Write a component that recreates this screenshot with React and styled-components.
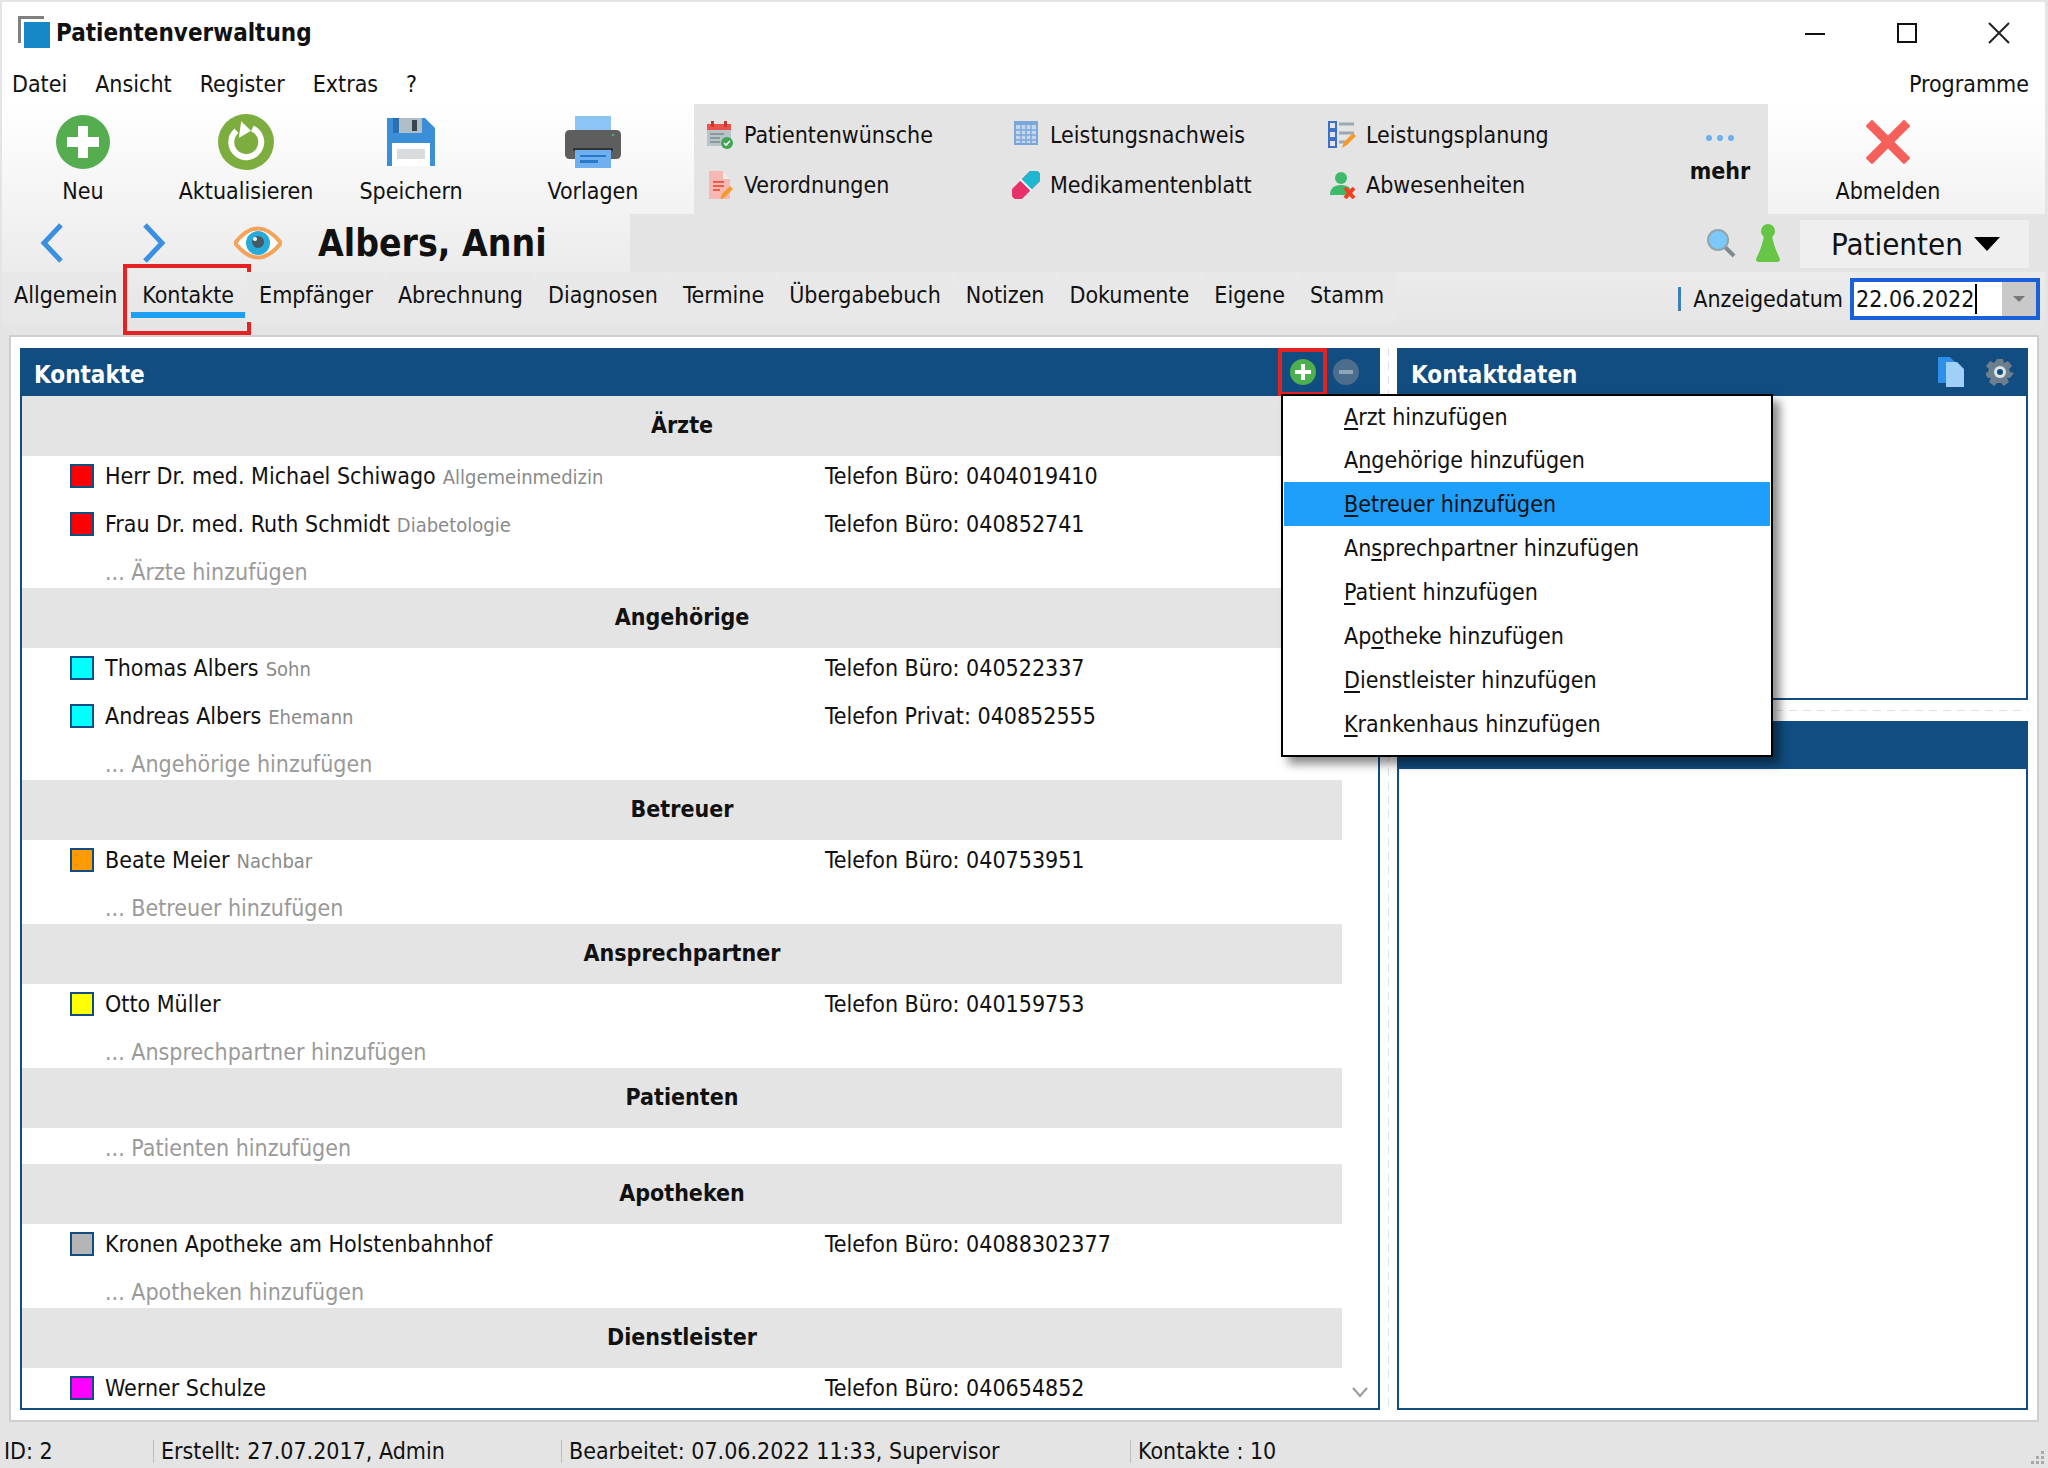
import React from "react";
import styled, { createGlobalStyle } from "styled-components";

const NAVY = "#114d80";

const Global = createGlobalStyle`
  html, body { margin: 0; padding: 0; background: #e4e4e4; }
  body {
    font-family: "DejaVu Sans", "Noto Sans", sans-serif;
    font-stretch: condensed;
    font-size: 23px;
    color: #111;
  }
  * { box-sizing: border-box; }
`;

const Window = styled.div`
  width: 2048px;
  height: 1468px;
  display: flex;
  flex-direction: column;
  overflow: hidden;
  background: #e4e4e4;
  border-top: 2px solid #e4e4e4;
  border-left: 2px solid #e4e4e4;
  border-right: 3px solid #e4e4e4;
`;

const TitleBar = styled.div`
  height: 62px;
  flex: none;
  display: flex;
  align-items: center;
  background: #fff;
  padding-left: 16px;
`;
const AppLogo = styled.svg`
  width: 34px;
  height: 34px;
  margin-right: 4px;
`;
const Title = styled.div`
  font-weight: 700;
  font-size: 24px;
`;
const WinButtons = styled.div`
  margin-left: auto;
  display: flex;
`;
const WinButton = styled.div`
  width: 92px;
  height: 62px;
  display: flex;
  align-items: center;
  justify-content: center;
`;

const MenuBar = styled.div`
  height: 40px;
  flex: none;
  display: flex;
  align-items: center;
  gap: 28px;
  padding: 0 16px 0 10px;
  background: #fff;
`;
const MenuEnd = styled.div`
  margin-left: auto;
`;

const TopZone = styled.div`
  height: 231px;
  flex: none;
  display: flex;
  flex-direction: column;
  background: linear-gradient(#fff, #e4e4e4);
`;

const Toolbar = styled.div`
  height: 110px;
  flex: none;
  display: flex;
`;
const ToolGroup = styled.div`
  width: 692px;
  display: flex;
`;
const Tool = styled.div`
  width: ${(p) => p.$w}px;
  display: flex;
  flex-direction: column;
  align-items: center;
  padding-top: 9px;
`;
const ToolIcon = styled.div`
  height: 57px;
  display: flex;
  align-items: center;
  justify-content: center;
`;
const ToolLabel = styled.div`
  line-height: 30px;
  margin-top: 6px;
`;

const QuickPanel = styled.div`
  width: 1074px;
  display: grid;
  grid-template-columns: 306px 316px 344px 96px;
  grid-template-rows: 50px 50px;
  padding: 6px 0 0 12px;
  background: #e4e4e4;
`;
const QuickItem = styled.div`
  display: flex;
  align-items: center;
  gap: 10px;
`;
const More = styled.div`
  grid-column: 4;
  grid-row: 1 / 3;
  display: flex;
  flex-direction: column;
  align-items: center;
  font-weight: 700;
`;
const MoreDots = styled.svg`
  margin-top: 24px;
  margin-bottom: 16px;
`;

const NavRow = styled.div`
  height: 58px;
  flex: none;
  display: flex;
`;
const NavLeft = styled.div`
  width: 628px;
  display: flex;
  align-items: center;
  padding-left: 38px;
`;
const PatientName = styled.div`
  font-weight: 700;
  font-size: 37px;
  margin-left: 36px;
`;
const NavFill = styled.div`
  flex: 1;
  display: flex;
  align-items: center;
  justify-content: flex-end;
  gap: 19px;
  padding-right: 16px;
  background: #e4e4e4;
`;
const ModeButton = styled.div`
  width: 229px;
  height: 48px;
  margin-top: 2px;
  display: flex;
  align-items: center;
  gap: 11px;
  padding-left: 31px;
  background: #efefef;
  font-size: 31px;
`;
const Triangle = styled.div`
  width: 0;
  height: 0;
  border-left: 13px solid transparent;
  border-right: 13px solid transparent;
  border-top: 14px solid #000;
`;

const TabRow = styled.div`
  height: 63px;
  flex: none;
  display: flex;
  align-items: flex-start;
`;
const Tab = styled.div`
  position: relative;
  height: 50px;
  display: flex;
  align-items: center;
  padding: 0 12px 4px;
  margin-right: 1px;
  background: ${(p) => (p.$active ? "transparent" : "#e8e8e8")};
  ${(p) =>
    p.$active &&
    `
    &::before {
      content: "";
      position: absolute;
      left: -7px;
      right: -5px;
      top: -8px;
      bottom: -13px;
      border: 4px solid #e52222;
    }
    &::after {
      content: "";
      position: absolute;
      left: 1px;
      right: 1px;
      bottom: 4px;
      height: 6px;
      background: #1e9ff2;
    }
  `}
`;
const DatePart = styled.div`
  margin-left: auto;
  display: flex;
  align-items: center;
  height: 54px;
  padding-right: 5px;
`;
const DateSep = styled.div`
  width: 3px;
  height: 24px;
  margin-right: 12px;
  background: #3f7fb8;
`;
const DateBox = styled.div`
  width: 190px;
  height: 42px;
  margin-left: 7px;
  display: flex;
  align-items: stretch;
  border: 4px solid #1a60d8;
  background: #fff;
`;
const DateText = styled.div`
  flex: 1;
  display: flex;
  align-items: center;
  padding-left: 2px;
  line-height: 1;
`;
const Caret = styled.div`
  width: 2px;
  height: 30px;
  margin-left: 1px;
  background: #000;
`;
const DateDrop = styled.div`
  width: 34px;
  display: flex;
  align-items: center;
  justify-content: center;
  background: #c9c9c9;
`;
const DateArrow = styled.div`
  width: 0;
  height: 0;
  border-left: 6px solid transparent;
  border-right: 6px solid transparent;
  border-top: 6px solid #777;
`;

const Workspace = styled.div`
  height: 1087px;
  flex: none;
  margin: 0 6px 0 7px;
  padding: 11px 9px 10px;
  background: #fff;
  border: 2px solid #cfcfcf;
`;
const Panes = styled.div`
  position: relative;
  height: 100%;
  display: flex;
`;
const LeftPane = styled.div`
  position: relative;
  width: 1360px;
  display: flex;
  flex-direction: column;
`;
const VSplit = styled.div`
  width: 17px;
  margin: 0 8px 0 8px;
  flex: none;
  width: 1px;
  background: repeating-linear-gradient(#e0e0e0 0 8px, #fff 8px 14px);
`;
const RightPane = styled.div`
  flex: 1;
  display: flex;
  flex-direction: column;
`;
const Panel = styled.div`
  display: flex;
  flex-direction: column;
  height: ${(p) => (p.$h ? `${p.$h}px` : "auto")};
  flex: ${(p) => (p.$h ? "none" : "1")};
  min-height: 0;
`;
const PanelHead = styled.div`
  height: 48px;
  flex: none;
  display: flex;
  align-items: center;
  padding: 5px 0 0 14px;
  background: ${NAVY};
  color: #fff;
  font-weight: 700;
  font-size: 24px;
`;
const HeadTools = styled.div`
  margin-left: auto;
  margin-top: -5px;
  height: 48px;
  display: flex;
  align-items: center;
  font-weight: 400;
  padding-right: ${(p) => p.$pad}px;
  gap: ${(p) => p.$gap}px;
`;
const HeadButton = styled.div`
  width: ${(p) => p.$w}px;
  height: 48px;
  display: flex;
  align-items: center;
  justify-content: center;
  border: ${(p) => (p.$marked ? "4px solid #e52222" : "none")};
`;
const PanelBody = styled.div`
  flex: 1;
  min-height: 0;
  overflow: hidden;
  background: #fff;
  border: 2px solid ${NAVY};
  border-top: none;
`;
const ContactList = styled.div`
  width: 1320px;
`;
const GroupHead = styled.div`
  height: 60px;
  display: flex;
  align-items: center;
  justify-content: center;
  padding-bottom: 2px;
  background: #e4e4e4;
  font-weight: 700;
`;
const Row = styled.div`
  height: 48px;
  display: grid;
  grid-template-columns: 24px 709px 1fr;
  column-gap: 11px;
  padding: 8px 0 0 48px;
  align-items: center;
  grid-template-rows: 24px;
`;
const Swatch = styled.div`
  width: 24px;
  height: 24px;
  background: ${(p) => p.$color};
  border: 2px solid ${NAVY};
`;
const Name = styled.div`
  white-space: nowrap;
`;
const Role = styled.span`
  margin-left: 7px;
  font-size: 20px;
  color: #8a8a8a;
`;
const AddRow = styled.div`
  height: 36px;
  padding: 6px 0 0 83px;
  line-height: 28px;
  color: #9a9a9a;
`;
const ScrollMark = styled.svg`
  position: absolute;
  right: 11px;
  bottom: 12px;
`;
const HSplit = styled.div`
  height: 1px;
  margin: 10px 0 10px;
  flex: none;
  background: repeating-linear-gradient(90deg, #e0e0e0 0 8px, #fff 8px 14px);
`;

const PopMenu = styled.div`
  position: absolute;
  left: 1261px;
  top: 46px;
  width: 492px;
  height: 363px;
  z-index: 5;
  padding: 0 1px;
  background: #fff;
  border: 2px solid #000;
  box-shadow: 7px 7px 9px rgba(0, 0, 0, 0.45);
`;
const PopItem = styled.div`
  height: ${(p) => (p.$first ? 42 : 44)}px;
  display: flex;
  align-items: center;
  padding-left: 60px;
  background: ${(p) => (p.$active ? "#1e9ffb" : "transparent")};
  u {
    text-decoration-thickness: 2px;
    text-underline-offset: 3px;
  }
`;

const StatusBar = styled.div`
  flex: 1;
  display: flex;
  align-items: flex-start;
  padding-top: 18px;
  position: relative;
`;
const StatusCell = styled.div`
  width: ${(p) => p.$w}px;
  height: 23px;
  line-height: 23px;
  padding-left: ${(p) => (p.$first ? 2 : 7)}px;
  border-left: ${(p) => (p.$first ? "none" : "1px solid #bdbdbd")};
  white-space: nowrap;
`;
const Grip = styled.svg`
  position: absolute;
  right: 0;
  bottom: 2px;
`;

const Ico = ({ w = 28, h = 28, vb, children }) => (
  <svg width={w} height={h} viewBox={vb || `0 0 ${w} ${h}`}>
    {children}
  </svg>
);

const menus = ["Datei", "Ansicht", "Register", "Extras", "?"];
const tabs = ["Allgemein", "Kontakte", "Empfänger", "Abrechnung", "Diagnosen", "Termine", "Übergabebuch", "Notizen", "Dokumente", "Eigene", "Stamm"];

const groups = [
  {
    title: "Ärzte",
    add: "Ärzte",
    rows: [
      { c: "#ff0000", n: "Herr Dr. med. Michael Schiwago", r: "Allgemeinmedizin", t: "Telefon Büro: 0404019410" },
      { c: "#ff0000", n: "Frau Dr. med. Ruth Schmidt", r: "Diabetologie", t: "Telefon Büro: 040852741" },
    ],
  },
  {
    title: "Angehörige",
    add: "Angehörige",
    rows: [
      { c: "#00ffff", n: "Thomas Albers", r: "Sohn", t: "Telefon Büro: 040522337" },
      { c: "#00ffff", n: "Andreas Albers", r: "Ehemann", t: "Telefon Privat: 040852555" },
    ],
  },
  { title: "Betreuer", add: "Betreuer", rows: [{ c: "#ff9a00", n: "Beate Meier", r: "Nachbar", t: "Telefon Büro: 040753951" }] },
  { title: "Ansprechpartner", add: "Ansprechpartner", rows: [{ c: "#ffff00", n: "Otto Müller", t: "Telefon Büro: 040159753" }] },
  { title: "Patienten", add: "Patienten", rows: [] },
  { title: "Apotheken", add: "Apotheken", rows: [{ c: "#b4b4b4", n: "Kronen Apotheke am Holstenbahnhof", t: "Telefon Büro: 04088302377" }] },
  { title: "Dienstleister", rows: [{ c: "#ff00ff", n: "Werner Schulze", t: "Telefon Büro: 040654852" }] },
];

const popItems = [
  ["", "A", "rzt hinzufügen"],
  ["A", "n", "gehörige hinzufügen"],
  ["", "B", "etreuer hinzufügen"],
  ["An", "s", "prechpartner hinzufügen"],
  ["", "P", "atient hinzufügen"],
  ["Ap", "o", "theke hinzufügen"],
  ["", "D", "ienstleister hinzufügen"],
  ["", "K", "rankenhaus hinzufügen"],
];

const Chevron = ({ dir }) => (
  <svg width="24" height="40" viewBox="0 0 24 40">
    <polyline
      points={dir === "l" ? "21,2 4,20 21,38" : "3,2 20,20 3,38"}
      fill="none"
      stroke="#3a8fe0"
      strokeWidth="5"
    />
  </svg>
);

export default function App() {
  return (
    <>
      <Global />
      <Window>
        <TitleBar>
          <AppLogo viewBox="0 0 34 34">
            <path d="M0 0h26v3H3v24H0z" fill="#808080" />
            <rect x="6" y="6" width="26" height="26" fill="#1688c8" />
          </AppLogo>
          <Title>Patientenverwaltung</Title>
          <WinButtons>
            <WinButton>
              <svg width="20" height="20"><path d="M0 11h20" stroke="#111" strokeWidth="2" /></svg>
            </WinButton>
            <WinButton>
              <svg width="20" height="20"><rect x="1" y="1" width="18" height="18" fill="none" stroke="#111" strokeWidth="2" /></svg>
            </WinButton>
            <WinButton>
              <svg width="22" height="22"><path d="M1 1l20 20M21 1L1 21" stroke="#222" strokeWidth="2" /></svg>
            </WinButton>
          </WinButtons>
        </TitleBar>

        <MenuBar>
          {menus.map((m) => (
            <div key={m}>{m}</div>
          ))}
          <MenuEnd>Programme</MenuEnd>
        </MenuBar>

        <TopZone>
          <Toolbar>
            <ToolGroup>
              <Tool $w={162}>
                <ToolIcon>
                  <Ico w={56} h={56}>
                    <circle cx="28" cy="28" r="27" fill="#55ad50" />
                    <path d="M23 12h10v11h11v10H33v11H23V33H12V23h11z" fill="#fff" />
                  </Ico>
                </ToolIcon>
                <ToolLabel>Neu</ToolLabel>
              </Tool>
              <Tool $w={164}>
                <ToolIcon>
                  <Ico w={56} h={56}>
                    <circle cx="28" cy="28" r="28" fill="#7dad3e" />
                    <path d="M21 15a15 15 0 1 0 16 1" fill="none" stroke="#fff" strokeWidth="6" transform="rotate(-12 28 28)" />
                    <path d="M22 8l11 8-11 9z" fill="#fff" transform="rotate(8 28 16)" />
                  </Ico>
                </ToolIcon>
                <ToolLabel>Aktualisieren</ToolLabel>
              </Tool>
              <Tool $w={166}>
                <ToolIcon>
                  <Ico w={48} h={48}>
                    <path d="M0 0h38l10 10v38H0z" fill="#3b8fd8" />
                    <path d="M6 0h29v15H6z" fill="#2a6fb4" />
                    <path d="M12 0h23v15H12z" fill="#b0bec8" />
                    <rect x="25" y="2" width="5" height="11" fill="#37474f" />
                    <rect x="5" y="25" width="38" height="23" fill="#fff" />
                    <rect x="10" y="31" width="28" height="10" fill="#d8dcde" />
                  </Ico>
                </ToolIcon>
                <ToolLabel>Speichern</ToolLabel>
              </Tool>
              <Tool $w={198}>
                <ToolIcon>
                  <Ico w={56} h={52}>
                    <rect x="10" y="0" width="36" height="18" fill="#8cc4f5" />
                    <path d="M5 14h46q5 0 5 5v19q0 5-5 5H5q-5 0-5-5V19q0-5 5-5z" fill="#5e5e5e" />
                    <rect x="8" y="32" width="40" height="3" fill="#333" />
                    <rect x="10" y="34" width="36" height="18" fill="#6eb0f0" />
                    <rect x="15" y="39" width="26" height="2" fill="#2a78c8" />
                    <rect x="15" y="44" width="18" height="3" fill="#2a78c8" />
                    <circle cx="48" cy="19" r="1" fill="#3fd08a" />
                  </Ico>
                </ToolIcon>
                <ToolLabel>Vorlagen</ToolLabel>
              </Tool>
            </ToolGroup>

            <QuickPanel>
              <QuickItem>
                <Ico>
                  <rect x="1" y="4" width="24" height="21" fill="#b9c4c9" />
                  <rect x="1" y="3" width="24" height="6" fill="#e8534a" />
                  <rect x="5" y="0" width="3" height="6" fill="#c23a32" />
                  <rect x="18" y="0" width="3" height="6" fill="#c23a32" />
                  <path d="M4 13h14M4 17h10M4 21h10" stroke="#8b989e" strokeWidth="2" />
                  <circle cx="21" cy="22" r="6" fill="#3fa652" />
                  <path d="M18 22l2 2 4-4" stroke="#fff" strokeWidth="1.6" fill="none" />
                </Ico>
                <span>Patientenwünsche</span>
              </QuickItem>
              <QuickItem>
                <Ico>
                  <rect x="2" y="0" width="24" height="24" fill="#7aa7d8" />
                  <path d="M4 4h20v18H4z" fill="#c4d6ec" />
                  <path d="M4 9h20M4 14h20M4 19h20M9 4v18M14 4v18M19 4v18" stroke="#7aa7d8" strokeWidth="1.4" />
                </Ico>
                <span>Leistungsnachweis</span>
              </QuickItem>
              <QuickItem>
                <Ico>
                  <rect x="1" y="1" width="7" height="7" fill="none" stroke="#3d6fc4" strokeWidth="2" />
                  <rect x="1" y="10" width="7" height="7" fill="none" stroke="#3d6fc4" strokeWidth="2" />
                  <rect x="1" y="19" width="7" height="7" fill="none" stroke="#3d6fc4" strokeWidth="2" />
                  <path d="M11 3h15M11 12h15M11 21h7" stroke="#9fa8b0" strokeWidth="3" />
                  <path d="M14 27l2-6 9-9 3 3-9 9z" fill="#f39a2b" />
                </Ico>
                <span>Leistungsplanung</span>
              </QuickItem>
              <More>
                <MoreDots width="30" height="8">
                  <circle cx="4" cy="4" r="3" fill="#6cb0ec" />
                  <circle cx="15" cy="4" r="3" fill="#6cb0ec" />
                  <circle cx="26" cy="4" r="3" fill="#6cb0ec" />
                </MoreDots>
                mehr
              </More>
              <QuickItem>
                <Ico>
                  <path d="M3 0h14l7 8v22H3z" fill="#f7b8b4" />
                  <path d="M17 0l7 8h-7z" fill="#eee" />
                  <path d="M7 11h11M7 15h11M7 19h7" stroke="#e8604c" strokeWidth="2" />
                  <path d="M14 29l2-6 8-8 3 3-8 8z" fill="#f39a2b" />
                </Ico>
                <span>Verordnungen</span>
              </QuickItem>
              <QuickItem>
                <Ico>
                  <g transform="rotate(45 14 14)">
                    <rect x="7" y="-4" width="14" height="36" rx="7" fill="#e8306a" />
                    <path d="M7 14V3a7 7 0 0 1 14 0v11z" fill="#1fb6d0" />
                    <rect x="6" y="13" width="16" height="2" fill="#fff" />
                  </g>
                </Ico>
                <span>Medikamentenblatt</span>
              </QuickItem>
              <QuickItem>
                <Ico>
                  <circle cx="13" cy="7" r="6" fill="#3dbb6a" />
                  <path d="M2 24q0-10 11-10t11 10z" fill="#3dbb6a" />
                  <path d="M17 17l9 10M26 17l-9 10" stroke="#f0401e" strokeWidth="4" />
                </Ico>
                <span>Abwesenheiten</span>
              </QuickItem>
            </QuickPanel>

            <Tool $w={240}>
              <ToolIcon>
                <Ico w={48} h={48}>
                  <path d="M8 3l16 16L40 3l5 5-16 16 16 16-5 5-16-16L8 45l-5-5 16-16L3 8z" fill="#f5605a" stroke="#f5605a" strokeWidth="2" strokeLinejoin="round" />
                </Ico>
              </ToolIcon>
              <ToolLabel>Abmelden</ToolLabel>
            </Tool>
          </Toolbar>

          <NavRow>
            <NavLeft>
              <Chevron dir="l" />
              <svg width="78" height="10" />
              <Chevron dir="r" />
              <svg width="68" height="10" />
              <Ico w={48} h={34}>
                <path d="M1 17Q24-12 47 17 24 46 1 17z" fill="#fff" stroke="#f5a35a" strokeWidth="4" />
                <circle cx="24" cy="17" r="12" fill="#29abd9" />
                <circle cx="24" cy="16" r="6" fill="#455a64" />
                <circle cx="21" cy="13" r="2" fill="#fff" />
              </Ico>
              <PatientName>Albers, Anni</PatientName>
            </NavLeft>
            <NavFill>
              <Ico w={30} h={30}>
                <path d="M19 19l9 9" stroke="#7d8b91" strokeWidth="4" />
                <circle cx="12" cy="12" r="10" fill="#7cc8fa" stroke="#90a4ae" strokeWidth="2" />
              </Ico>
              <Ico w={26} h={40}>
                <circle cx="13" cy="8" r="7" fill="#66c544" />
                <path d="M9 12h8q1 10 8 24 0 3-3 3H4q-3 0-3-3 7-14 8-24z" fill="#66c544" />
              </Ico>
              <ModeButton>
                Patienten
                <Triangle />
              </ModeButton>
            </NavFill>
          </NavRow>

          <TabRow>
            {tabs.map((t) => (
              <Tab key={t} $active={t === "Kontakte"}>
                {t}
              </Tab>
            ))}
            <DatePart>
              <DateSep />
              Anzeigedatum
              <DateBox>
                <DateText>
                  22.06.2022
                  <Caret />
                </DateText>
                <DateDrop>
                  <DateArrow />
                </DateDrop>
              </DateBox>
            </DatePart>
          </TabRow>
        </TopZone>

        <Workspace>
          <Panes>
            <LeftPane>
              <Panel>
                <PanelHead>
                  Kontakte
                  <HeadTools $pad={15} $gap={0}>
                    <HeadButton $w={49} $marked>
                      <Ico w={28} h={28}>
                        <circle cx="14" cy="14" r="13" fill="#4caf50" />
                        <path d="M12 6h4v6h6v4h-6v6h-4v-6H6v-4h6z" fill="#fff" />
                      </Ico>
                    </HeadButton>
                    <HeadButton $w={38}>
                      <Ico w={28} h={28}>
                        <circle cx="14" cy="14" r="13" fill="#4c6d8c" />
                        <rect x="7" y="12" width="14" height="4" fill="#8ea5ba" />
                      </Ico>
                    </HeadButton>
                  </HeadTools>
                </PanelHead>
                <PanelBody>
                  <ContactList>
                    {groups.map((g) => (
                      <div key={g.title}>
                        <GroupHead>{g.title}</GroupHead>
                        {g.rows.map((r) => (
                          <Row key={r.n}>
                            <Swatch $color={r.c} />
                            <Name>
                              {r.n}
                              {r.r && <Role>{r.r}</Role>}
                            </Name>
                            <Name>{r.t}</Name>
                          </Row>
                        ))}
                        {g.add && <AddRow>... {g.add} hinzufügen</AddRow>}
                      </div>
                    ))}
                  </ContactList>
                </PanelBody>
              </Panel>
              <ScrollMark width="18" height="12">
                <path d="M2 2l7 8 7-8" fill="none" stroke="#999" strokeWidth="2" />
              </ScrollMark>
            </LeftPane>

            <VSplit />

            <RightPane>
              <Panel $h={352}>
                <PanelHead>
                  Kontaktdaten
                  <HeadTools $pad={14} $gap={22}>
                    <Ico w={26} h={30}>
                      <path d="M0 0h12l8 8v18H0z" fill="#2f8fe8" />
                      <path d="M8 5h11l7 7v18H8z" fill="#9fd0f8" />
                    </Ico>
                    <Ico w={28} h={30} vb="0 0 28 28">
                      <path d="M11 1h6l1 4 4-2 4 5-3 3 1 3 4 1v0l-4 5-3 0 2 4-5 4-3-3h-4l-3 3-5-4 2-4-3 0-4-5 4-1 1-3-3-3 4-5 4 2z" fill="#6d7f8e" />
                      <circle cx="14" cy="14" r="6" fill="#dfe6ea" />
                      <circle cx="14" cy="14" r="3" fill="#114d80" />
                    </Ico>
                  </HeadTools>
                </PanelHead>
                <PanelBody />
              </Panel>
              <HSplit />
              <Panel>
                <PanelHead />
                <PanelBody />
              </Panel>
            </RightPane>

            <PopMenu>
              {popItems.map(([a, k, b], i) => (
                <PopItem key={k + b} $first={i === 0} $active={i === 2}>
                  <span>
                    {a}
                    <u>{k}</u>
                    {b}
                  </span>
                </PopItem>
              ))}
            </PopMenu>
          </Panes>
        </Workspace>

        <StatusBar>
          <StatusCell $first $w={151}>ID: 2</StatusCell>
          <StatusCell $w={408}>Erstellt: 27.07.2017, Admin</StatusCell>
          <StatusCell $w={569}>Bearbeitet: 07.06.2022 11:33, Supervisor</StatusCell>
          <StatusCell $w={300}>Kontakte : 10</StatusCell>
          <Grip width="16" height="16">
            <g fill="#a9a9a9">
              <rect x="12" y="1" width="3" height="3" />
              <rect x="7" y="6" width="3" height="3" />
              <rect x="12" y="6" width="3" height="3" />
              <rect x="2" y="11" width="3" height="3" />
              <rect x="7" y="11" width="3" height="3" />
              <rect x="12" y="11" width="3" height="3" />
            </g>
          </Grip>
        </StatusBar>
      </Window>
    </>
  );
}
